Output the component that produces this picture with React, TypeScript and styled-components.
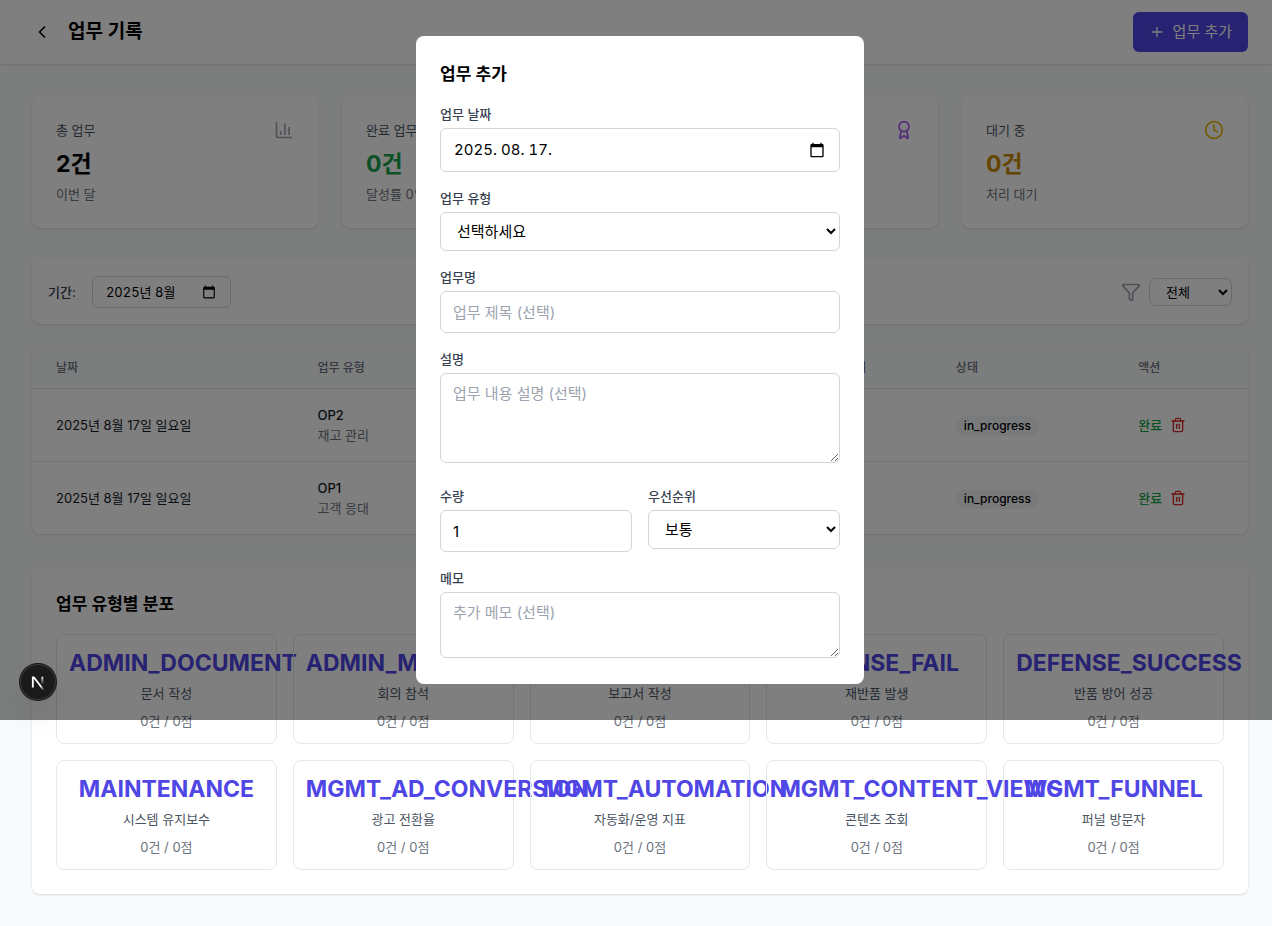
import React from "react";
import styled, { createGlobalStyle, css } from "styled-components";
import { Award, ChartColumn, ChevronLeft, CircleCheckBig, Clock, Funnel, Plus, Trash2 } from "lucide-react";

const color = {
  page: "#f9fafb",
  surface: "#ffffff",
  line: "#e5e7eb",
  control: "#d1d5db",
  heading: "#000000",
  strong: "#111827",
  label: "#374151",
  text: "#4b5563",
  muted: "#6b7280",
  faint: "#9ca3af",
  brand: "#4f46e5",
  green: "#16a34a",
  yellow: "#ca8a04",
  red: "#dc2626",
};

const GlobalStyle = createGlobalStyle`
  *, *::before, *::after { box-sizing: border-box; }
  body {
    margin: 0;
    background: ${color.page};
    color: ${color.heading};
    font-family: Inter, "Noto Sans CJK KR", sans-serif;
    font-size: 15px;
    line-height: 24px;
  }
  h1, h2, p { margin: 0; }
  button, input, select, textarea { font: inherit; color: inherit; margin: 0; }
  button { border: 0; padding: 0; background: none; cursor: pointer; }
  svg { display: block; flex: none; }
`;

const surface = css`
  background: ${color.surface};
  border-radius: 8px;
  box-shadow: 0 1px 3px rgba(0, 0, 0, 0.1), 0 1px 2px -1px rgba(0, 0, 0, 0.1);
`;

const Page = styled.div`
  position: relative;
`;

const Header = styled.header`
  display: flex;
  align-items: center;
  justify-content: space-between;
  padding: 12px 24px;
  background: ${color.surface};
  box-shadow: 0 1px 2px rgba(0, 0, 0, 0.1);
`;

const HeaderLeft = styled.div`
  display: flex;
  align-items: center;
  gap: 8px;
`;

const BackButton = styled.button`
  padding: 8px;
`;

const PageTitle = styled.h1`
  font-size: 19px;
  line-height: 28px;
  font-weight: 600;
`;

const PrimaryButton = styled.button`
  display: flex;
  align-items: center;
  gap: 8px;
  padding: 8px 16px;
  border-radius: 6px;
  background: ${color.brand};
  color: #ffffff;
`;

const Main = styled.main`
  display: flex;
  flex-direction: column;
  padding: 32px 24px 32px 32px;
`;

const StatGrid = styled.section`
  display: grid;
  grid-template-columns: repeat(4, minmax(0, 1fr));
  gap: 24px;
  margin-bottom: 32px;
`;

const StatCard = styled.article`
  ${surface}
  padding: 24px;
`;

const StatHead = styled.div<{ $icon: string }>`
  display: flex;
  align-items: center;
  justify-content: space-between;
  margin-bottom: 8px;
  font-size: 13px;
  line-height: 20px;
  color: ${color.text};

  svg { color: ${(p) => p.$icon}; }
`;

const StatValue = styled.p<{ $tone: string }>`
  font-size: 23px;
  line-height: 32px;
  font-weight: 700;
  color: ${(p) => p.$tone};
`;

const StatNote = styled.p`
  margin-top: 4px;
  font-size: 13px;
  line-height: 20px;
  color: ${color.muted};
`;

const FilterBar = styled.section`
  ${surface}
  display: flex;
  align-items: center;
  justify-content: space-between;
  padding: 16px;
  margin-bottom: 24px;
  font-size: 13px;
  line-height: 20px;
`;

const FilterGroup = styled.div<{ $gap: number }>`
  display: flex;
  align-items: center;
  gap: ${(p) => p.$gap}px;
  color: ${color.faint};
`;

const FilterLabel = styled.label`
  font-weight: 500;
  color: ${color.label};
`;

const controlFrame = css`
  border: 1px solid ${color.control};
  border-radius: 6px;
  background: ${color.surface};
  color: ${color.heading};
`;

const DateControl = styled.div<{ $compact?: boolean }>`
  ${controlFrame}
  display: flex;
  align-items: center;
  width: ${(p) => (p.$compact ? "139px" : "100%")};
  height: ${(p) => (p.$compact ? "32px" : "44px")};
  padding: 0 14px 0 13px;
`;

const DateInput = styled.input`
  flex: 1;
  min-width: 0;
  padding: 0;
  border: 0;
  outline: 0;
  background: none;
  font-variant-numeric: tabular-nums;
`;

const StatusSelect = styled.select`
  ${controlFrame}
  width: 83px;
  height: 28px;
  padding: 0 12px;
`;

const TablePanel = styled.section`
  ${surface}
  overflow: hidden;
  margin-bottom: 32px;
`;

const Table = styled.table`
  width: 100%;
  table-layout: fixed;
  border-spacing: 0;
  font-size: 13px;
  line-height: 20px;
`;

const Th = styled.th<{ $width?: string }>`
  width: ${(p) => p.$width ?? "auto"};
  padding: 12px 24px;
  background: ${color.page};
  font-size: 12px;
  line-height: 16px;
  font-weight: 500;
  text-align: left;
  color: ${color.muted};
`;

const Td = styled.td`
  padding: 16px 24px;
  border-top: 1px solid ${color.line};
  color: ${color.strong};
`;

const TypeCode = styled.div`
  font-weight: 500;
`;

const TypeName = styled.div`
  color: ${color.muted};
`;

const Badge = styled.span`
  display: inline-block;
  padding: 2px 8px;
  border-radius: 10px;
  background: #f3f4f6;
  font-size: 12px;
  line-height: 16px;
  font-weight: 500;
  color: ${color.heading};
`;

const Actions = styled.div`
  display: flex;
  align-items: center;
  gap: 8px;
`;

const ActionButton = styled.button<{ $tone: string }>`
  color: ${(p) => p.$tone};
  font-weight: 500;
`;

const Distribution = styled.section`
  ${surface}
  padding: 24px;
`;

const SectionTitle = styled.h2`
  margin-bottom: 16px;
  font-size: 17px;
  line-height: 28px;
  font-weight: 600;
`;

const TypeGrid = styled.div`
  display: grid;
  grid-template-columns: repeat(5, minmax(0, 1fr));
  gap: 16px;
`;

const TypeCard = styled.article`
  padding: 12px;
  border: 1px solid ${color.line};
  border-radius: 8px;
  font-size: 13px;
  line-height: 20px;
  text-align: center;
`;

const TypeTitle = styled.p`
  font-size: 23px;
  line-height: 32px;
  font-weight: 700;
  color: ${color.brand};
`;

const TypeLabel = styled.p`
  margin-top: 4px;
  color: ${color.text};
`;

const TypeCount = styled.p`
  margin-top: 8px;
  color: ${color.muted};
`;

const Overlay = styled.div`
  position: absolute;
  top: 0;
  left: 0;
  right: 0;
  height: 720px;
  display: flex;
  align-items: center;
  justify-content: center;
  padding-left: 8px;
  background: rgba(0, 0, 0, 0.5);
`;

const Dialog = styled.div`
  width: 100%;
  max-width: 448px;
  height: 90%;
  padding: 24px;
  overflow: hidden;
  border-radius: 8px;
  background: ${color.surface};
`;

const Form = styled.form`
  display: flex;
  flex-direction: column;
  gap: 16px;
`;

const FieldRow = styled.div`
  display: grid;
  grid-template-columns: 1fr 1fr;
  gap: 16px;
`;

const Field = styled.div`
  min-width: 0;
`;

const FieldLabel = styled.label`
  display: block;
  margin-bottom: 4px;
  font-size: 13px;
  line-height: 20px;
  font-weight: 500;
  color: ${color.label};
`;

const fieldBox = css`
  ${controlFrame}
  display: block;
  width: 100%;
  padding: 8px 12px;
  &::placeholder { color: ${color.faint}; opacity: 1; }
`;

const TextInput = styled.input`
  ${fieldBox}
  height: 42px;
`;

const SelectInput = styled.select`
  ${fieldBox}
  height: 39px;
`;

const TextArea = styled.textarea`
  ${fieldBox}
  margin-bottom: 7px;
`;

const DevBadge = styled.button`
  position: absolute;
  top: 664px;
  left: 20px;
  width: 36px;
  height: 36px;
  border-radius: 50%;
  background: #1a1a1a;
  box-shadow: 0 0 0 1px #171717, inset 0 0 0 1px rgba(255, 255, 255, 0.14),
    0 16px 32px -8px rgba(0, 0, 0, 0.24);
`;

const CalendarIcon = ({ size }: { size: number }) => (
  <svg width={size} height={size} viewBox="0 0 24 24" fill="currentColor" aria-hidden="true">
    <path d="M20 3h-1V1h-2v2H7V1H5v2H4c-1.1 0-2 .9-2 2v16c0 1.1.9 2 2 2h16c1.1 0 2-.9 2-2V5c0-1.1-.9-2-2-2zm0 18H4V8h16v13z" />
  </svg>
);

const NextMark = () => (
  <svg width="36" height="36" viewBox="2 2 36 36" fill="none" aria-hidden="true">
    <defs>
      <linearGradient id="diagonal" x1="9.95555" y1="11.1226" x2="15.4778" y2="17.9671" gradientUnits="userSpaceOnUse">
        <stop stopColor="white" />
        <stop offset="0.604072" stopColor="white" stopOpacity="0" />
      </linearGradient>
      <linearGradient id="stem" x1="11.8222" y1="1.40039" x2="11.791" y2="9.62542" gradientUnits="userSpaceOnUse">
        <stop stopColor="white" />
        <stop offset="1" stopColor="white" stopOpacity="0" />
      </linearGradient>
      <clipPath id="flatTop">
        <rect x="0" y="1.5" width="16" height="16" />
      </clipPath>
    </defs>
    <g transform="translate(12.5 13)" strokeWidth="1.86" clipPath="url(#flatTop)">
      <path d="M13.3 15.2 L2.34 1 V12.6" stroke="url(#diagonal)" />
      <path d="M11.825 1.5 V13.1" stroke="url(#stem)" />
    </g>
  </svg>
);

const stats = [
  { label: "총 업무", value: "2건", note: "이번 달", tone: color.heading, icon: color.faint, Icon: ChartColumn },
  { label: "완료 업무", value: "0건", note: "달성률 0%", tone: color.green, icon: "#22c55e", Icon: CircleCheckBig },
  { label: "총 점수", value: "0점", note: "이번 달", tone: "#9333ea", icon: "#a855f7", Icon: Award },
  { label: "대기 중", value: "0건", note: "처리 대기", tone: color.yellow, icon: "#eab308", Icon: Clock },
];

const rows = [
  { date: "2025년 8월 17일 일요일", code: "OP2", name: "재고 관리" },
  { date: "2025년 8월 17일 일요일", code: "OP1", name: "고객 응대" },
];

const types = [
  ["ADMIN_DOCUMENT", "문서 작성"],
  ["ADMIN_MEETING", "회의 참석"],
  ["ADMIN_REPORT", "보고서 작성"],
  ["DEFENSE_FAIL", "재반품 발생"],
  ["DEFENSE_SUCCESS", "반품 방어 성공"],
  ["MAINTENANCE", "시스템 유지보수"],
  ["MGMT_AD_CONVERSION", "광고 전환율"],
  ["MGMT_AUTOMATION", "자동화/운영 지표"],
  ["MGMT_CONTENT_VIEWS", "콘텐츠 조회"],
  ["MGMT_FUNNEL", "퍼널 방문자"],
];

export default function App() {
  return (
    <Page>
      <GlobalStyle />
      <Header>
        <HeaderLeft>
          <BackButton type="button" aria-label="뒤로">
            <ChevronLeft size={20} />
          </BackButton>
          <PageTitle>업무 기록</PageTitle>
        </HeaderLeft>
        <PrimaryButton type="button">
          <Plus size={16} />
          업무 추가
        </PrimaryButton>
      </Header>

      <Main>
        <StatGrid>
          {stats.map(({ label, value, note, tone, icon, Icon }) => (
            <StatCard key={label}>
              <StatHead $icon={icon}>
                <span>{label}</span>
                <Icon size={20} />
              </StatHead>
              <StatValue $tone={tone}>{value}</StatValue>
              <StatNote>{note}</StatNote>
            </StatCard>
          ))}
        </StatGrid>

        <FilterBar>
          <FilterGroup $gap={16}>
            <FilterLabel htmlFor="period">기간:</FilterLabel>
            <DateControl $compact>
              <DateInput id="period" defaultValue="2025년 8월" />
              <button type="button" aria-label="월 선택">
                <CalendarIcon size={14} />
              </button>
            </DateControl>
          </FilterGroup>
          <FilterGroup $gap={8}>
            <Funnel size={20} />
            <StatusSelect aria-label="상태 필터">
              <option>전체</option>
            </StatusSelect>
          </FilterGroup>
        </FilterBar>

        <TablePanel>
          <Table>
            <thead>
              <tr>
                <Th $width="21.5%">날짜</Th>
                <Th>업무 유형</Th>
                <Th $width="11%">우선순위</Th>
                <Th $width="15%">상태</Th>
                <Th $width="11%">액션</Th>
              </tr>
            </thead>
            <tbody>
              {rows.map((row) => (
                <tr key={row.code}>
                  <Td>{row.date}</Td>
                  <Td>
                    <TypeCode>{row.code}</TypeCode>
                    <TypeName>{row.name}</TypeName>
                  </Td>
                  <Td />
                  <Td>
                    <Badge>in_progress</Badge>
                  </Td>
                  <Td>
                    <Actions>
                      <ActionButton type="button" $tone={color.green}>완료</ActionButton>
                      <ActionButton type="button" $tone={color.red} aria-label="삭제">
                        <Trash2 size={16} />
                      </ActionButton>
                    </Actions>
                  </Td>
                </tr>
              ))}
            </tbody>
          </Table>
        </TablePanel>

        <Distribution>
          <SectionTitle>업무 유형별 분포</SectionTitle>
          <TypeGrid>
            {types.map(([code, name]) => (
              <TypeCard key={code}>
                <TypeTitle>{code}</TypeTitle>
                <TypeLabel>{name}</TypeLabel>
                <TypeCount>0건 / 0점</TypeCount>
              </TypeCard>
            ))}
          </TypeGrid>
        </Distribution>
      </Main>

      <Overlay>
        <Dialog role="dialog" aria-modal="true" aria-labelledby="dialog-title">
          <SectionTitle id="dialog-title">업무 추가</SectionTitle>
          <Form>
            <Field>
              <FieldLabel htmlFor="date">업무 날짜</FieldLabel>
              <DateControl>
                <DateInput id="date" defaultValue="2025. 08. 17." />
                <button type="button" aria-label="날짜 선택">
                  <CalendarIcon size={16} />
                </button>
              </DateControl>
            </Field>
            <Field>
              <FieldLabel htmlFor="type">업무 유형</FieldLabel>
              <SelectInput id="type">
                <option>선택하세요</option>
              </SelectInput>
            </Field>
            <Field>
              <FieldLabel htmlFor="name">업무명</FieldLabel>
              <TextInput id="name" placeholder="업무 제목 (선택)" />
            </Field>
            <Field>
              <FieldLabel htmlFor="description">설명</FieldLabel>
              <TextArea id="description" rows={3} placeholder="업무 내용 설명 (선택)" />
            </Field>
            <FieldRow>
              <Field>
                <FieldLabel htmlFor="quantity">수량</FieldLabel>
                <TextInput id="quantity" type="number" min={1} defaultValue={1} />
              </Field>
              <Field>
                <FieldLabel htmlFor="priority">우선순위</FieldLabel>
                <SelectInput id="priority">
                  <option>보통</option>
                </SelectInput>
              </Field>
            </FieldRow>
            <Field>
              <FieldLabel htmlFor="memo">메모</FieldLabel>
              <TextArea id="memo" rows={2} placeholder="추가 메모 (선택)" />
            </Field>
          </Form>
        </Dialog>
      </Overlay>

      <DevBadge type="button" aria-label="Next.js">
        <NextMark />
      </DevBadge>
    </Page>
  );
}
